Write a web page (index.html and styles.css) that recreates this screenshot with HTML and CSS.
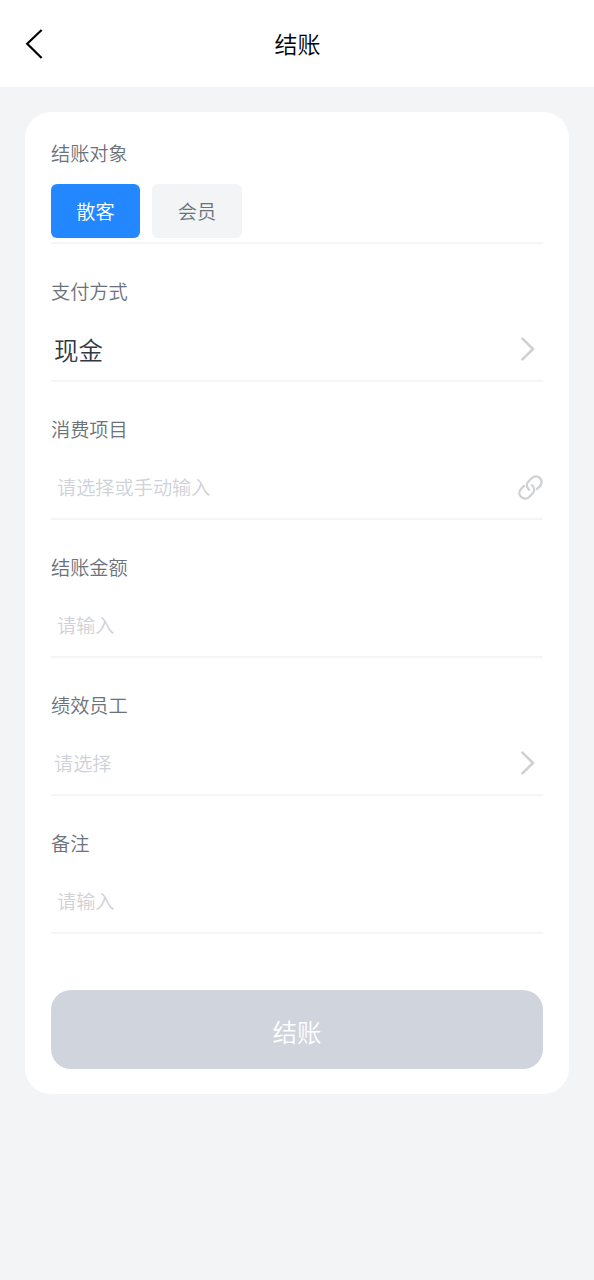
FILE: index.html
```html
<!DOCTYPE html>
<html lang="zh-CN">
<head>
<meta charset="utf-8">
<title>结账</title>
<link rel="stylesheet" href="styles.css">
</head>
<body>
<header class="navbar">
  <svg class="back" viewBox="0 0 20 32" aria-label="返回"><path d="M17.6 2 3.2 15.7 17.6 30"/></svg>
  <h1 class="title">结账</h1>
</header>
<main class="card">
  <section class="field">
    <div class="label">结账对象</div>
    <div class="tabs"><button class="tab active">散客</button><button class="tab">会员</button></div>
  </section>
  <section class="field">
    <div class="label">支付方式</div>
    <div class="control"><span class="value">现金</span><svg class="chevron" viewBox="0 0 16 24"><path d="M2.4 1.6 13 12 2.4 22.4"/></svg></div>
  </section>
  <section class="field">
    <div class="label">消费项目</div>
    <div class="control input"><span class="placeholder">请选择或手动输入</span><svg class="link" viewBox="0 0 26 26"><path d="M11.6 15.4C8.4 13 8.4 9.2 10.8 6.8L14.2 3.4C16.8.8 20.4.8 22.8 3.2C25.2 5.6 25.2 9.2 22.6 11.8L19.6 14.6"/><path d="M14.4 10.6C17.6 13 17.6 16.8 15.2 19.2L11.8 22.6C9.2 25.2 5.6 25.2 3.2 22.8C.8 20.4.8 16.8 3.4 14.2L6.4 11.4"/></svg></div>
  </section>
  <section class="field">
    <div class="label">结账金额</div>
    <div class="control input"><span class="placeholder">请输入</span></div>
  </section>
  <section class="field">
    <div class="label">绩效员工</div>
    <div class="control"><span class="placeholder">请选择</span><svg class="chevron" viewBox="0 0 16 24"><path d="M2.4 1.6 13 12 2.4 22.4"/></svg></div>
  </section>
  <section class="field">
    <div class="label">备注</div>
    <div class="control input"><span class="placeholder">请输入</span></div>
  </section>
  <button class="submit">结账</button>
</main>
</body>
</html>
```

FILE: styles.css
```css
* { box-sizing: border-box; }
body {
  margin: 0;
  min-height: 1280px;
  background: #f2f4f6;
  font-family: "Noto Sans CJK SC DemiLight", "Noto Sans CJK SC", sans-serif;
  font-weight: 350;
  color: #303844;
}
button { border: 0; padding: 0; font-family: inherit; font-weight: inherit; }
svg { display: block; fill: none; stroke-linecap: round; stroke-linejoin: round; }
.navbar {
  display: grid;
  grid-template-columns: 20px 1fr 20px;
  align-items: center;
  height: 87px;
  padding: 0 23px 0 24px;
  background: #fff;
}
.back { width: 20px; height: 32px; stroke: #000; stroke-width: 2.2; stroke-linecap: butt; stroke-linejoin: miter; }
.title { margin: 0; padding-bottom: 1px; text-align: center; font-size: 23px; font-weight: 400; color: #000; }
.card {
  margin: 25px 25px 0;
  padding: 27px 26px 25px;
  border-radius: 26px;
  background: #fff;
}
.field { height: 104.5px; border-bottom: 2px solid #f4f5f6; }
.field + .field { margin-top: 33.5px; }
.label { height: 28px; line-height: 28px; font-size: 19.2px; color: #6b727a; }
.tabs { display: flex; gap: 12px; padding-top: 17px; }
.tab { width: 89px; height: 53.5px; padding-top: 1px; border-radius: 6px; background: #f2f4f6; color: #6b727a; font-size: 19.2px; }
.tab + .tab { width: 90px; }
.tab.active { background: #2388ff; color: #fff; }
.control {
  display: flex;
  align-items: center;
  justify-content: space-between;
  height: 60px;
  margin-top: 14px;
  padding: 0 7px 0 3px;
}
.control.input { padding: 0 0 0 6px; }
.value { font-size: 24.5px; }
.placeholder { font-size: 19.2px; color: #cfd2d8; }
.chevron { width: 16px; height: 24px; stroke: #cfd1d4; stroke-width: 2.6; }
.link { width: 25px; height: 25px; stroke: #cfd1d4; stroke-width: 2.4; }
.submit {
  display: block;
  width: 100%;
  height: 79px;
  margin-top: 56.5px;
  padding-top: 4px;
  border-radius: 20px;
  background: #d0d4dc;
  color: #fff;
  font-size: 24.5px;
}
```
